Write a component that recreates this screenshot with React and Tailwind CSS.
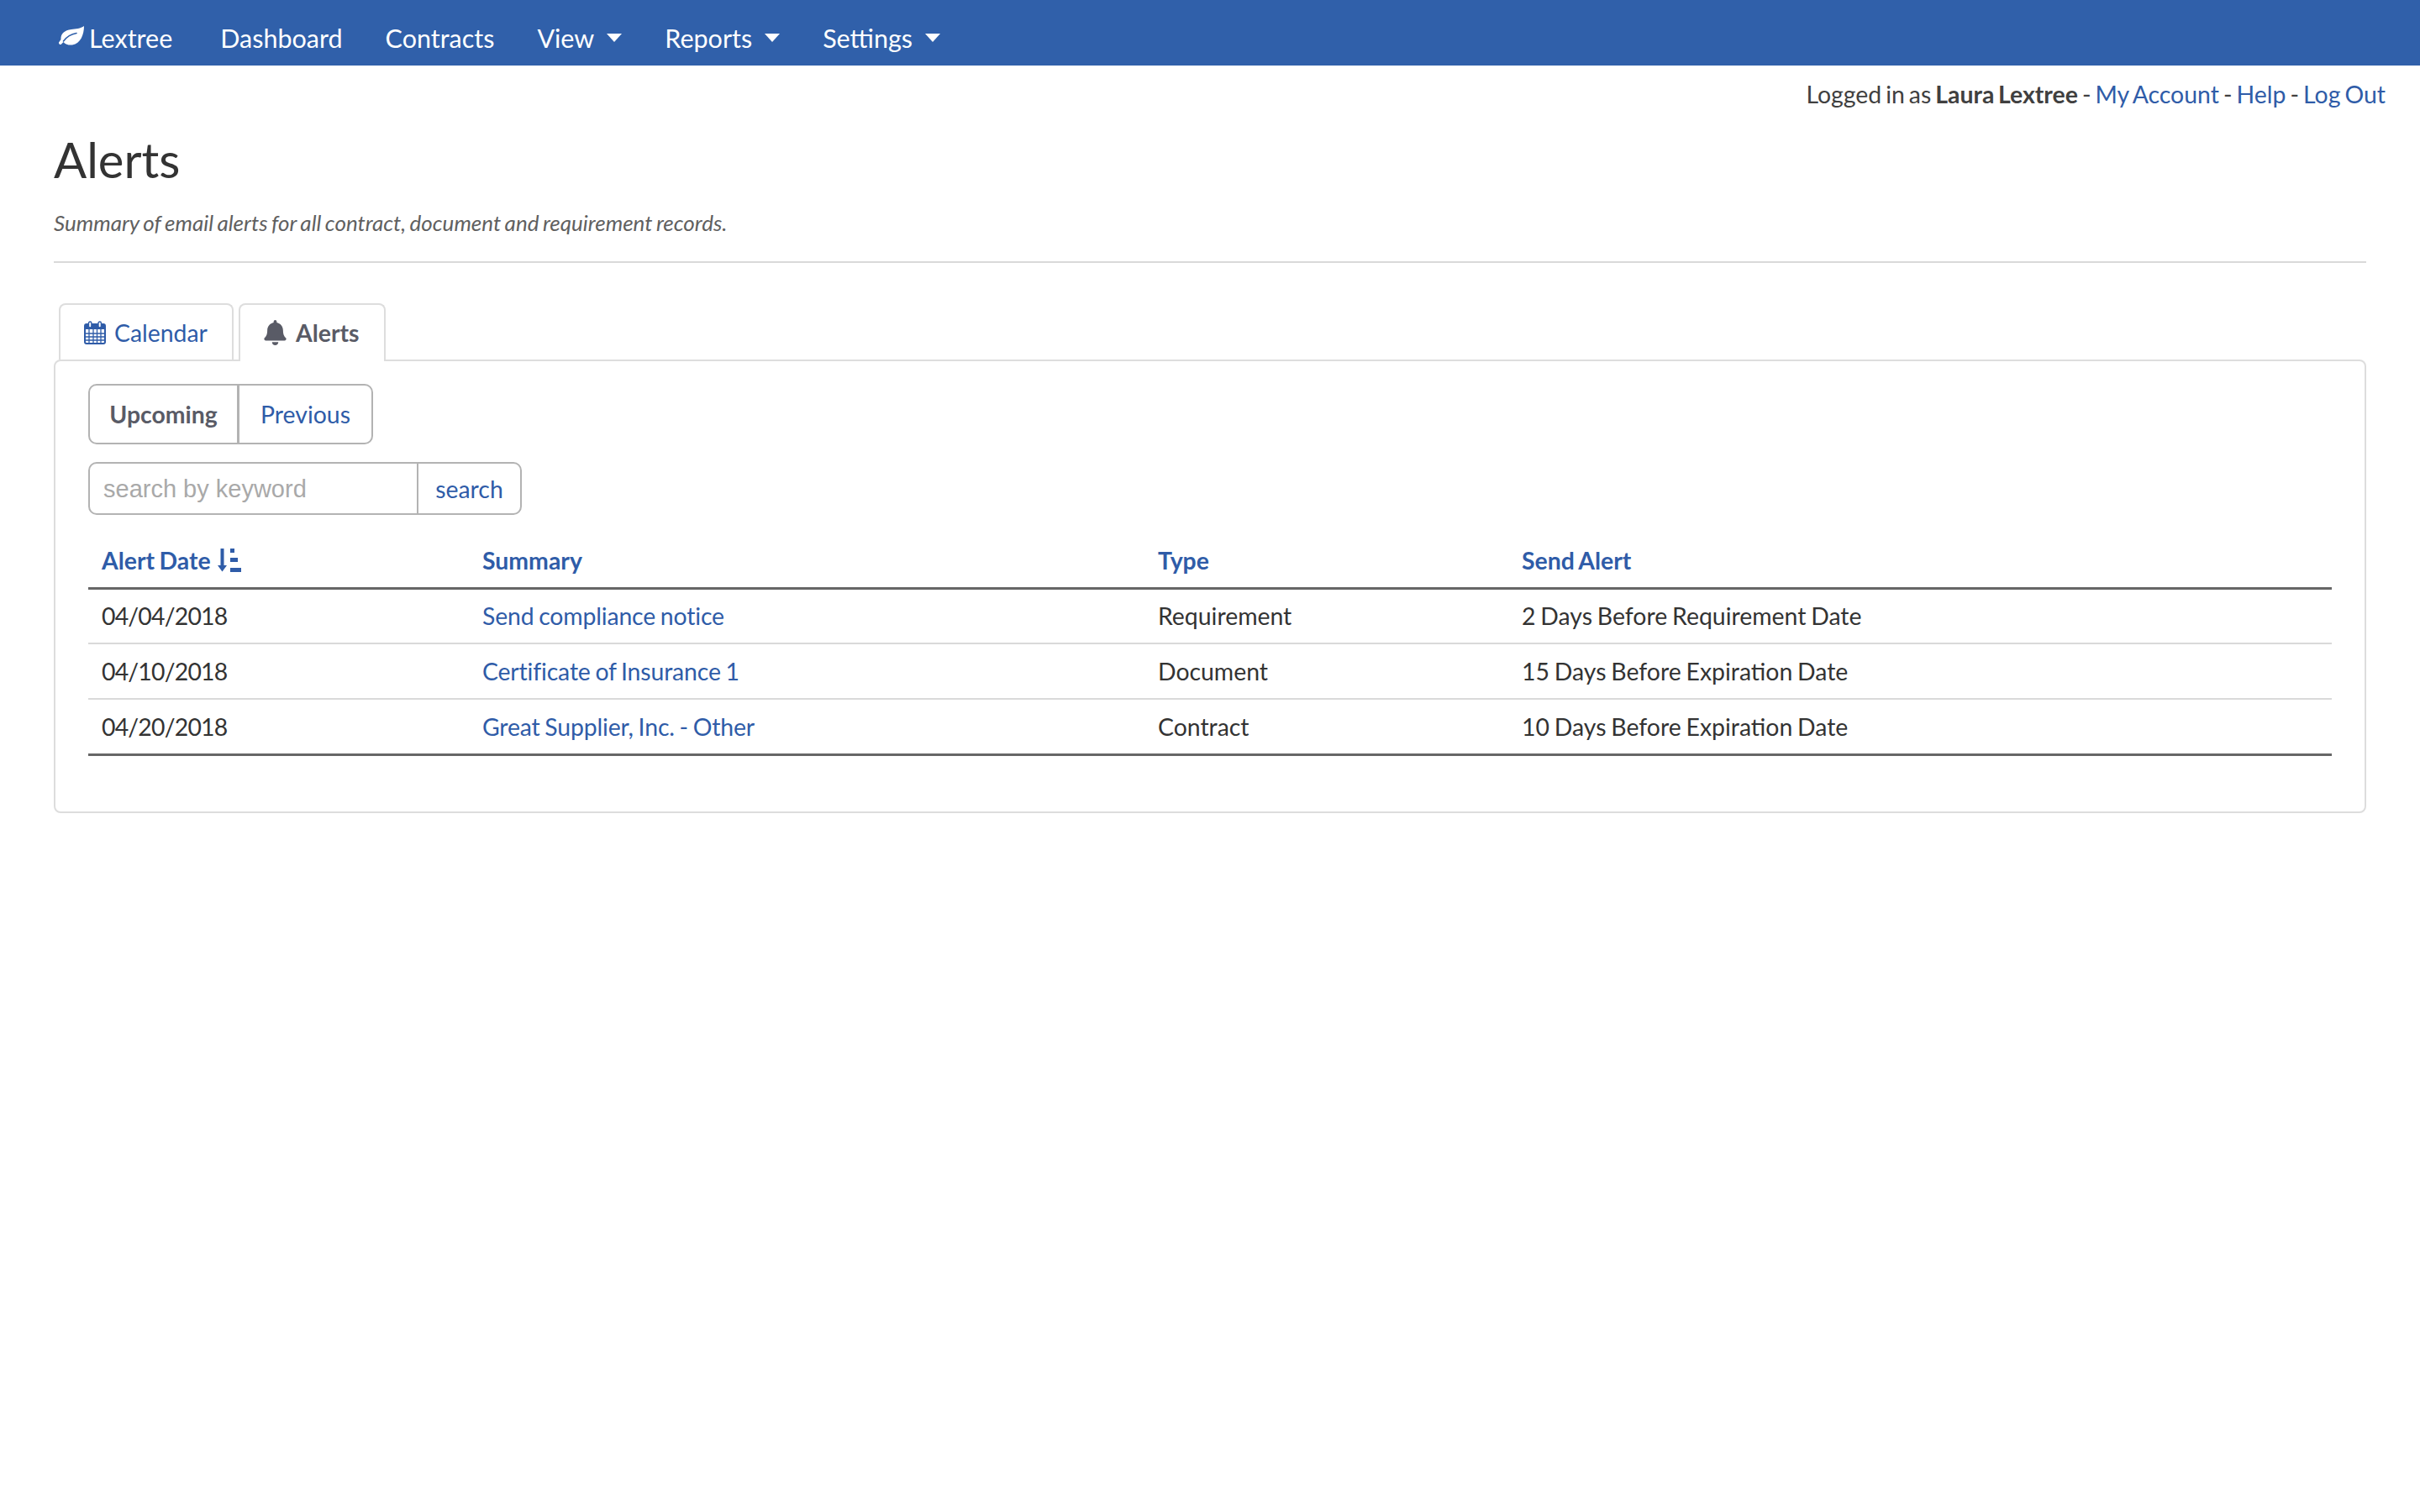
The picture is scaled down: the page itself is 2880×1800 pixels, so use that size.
import React from "react";
import { FaBell } from "react-icons/fa";

const Caret = () => (
  <span className="ml-[15px] inline-block h-0 w-0 border-x-[9px] border-t-[10px] border-x-transparent border-t-white" />
);

const NavItem = ({ children, caret }) => (
  <a className="flex items-center text-white">
    {children}
    {caret && <Caret />}
  </a>
);

const LeafIcon = () => (
  <svg viewBox="0 0 30 23" className="mr-[6px] mb-[6px] h-[23px] w-[30px]">
    <path
      fill="white"
      d="M30 0C26 3 20 3.500 15 4C6 5 2 10 2.500 16L0 19.500C-.5 21 1.500 23 3 21.500L5.500 19C8 22 12 23 16 22.500C26 21 30 10 30 0Z"
    />
    <path d="M5.500 18C10 12 15 9.500 21 8.500" fill="none" stroke="#3060aa" strokeWidth="1.600" strokeLinecap="round" />
  </svg>
);

const CalendarIcon = () => (
  <svg viewBox="0 0 26 28" className="h-[28px] w-[26px]" fill="none">
    <rect x="1" y="4" width="24" height="23" rx="2" stroke="#2f5ca8" strokeWidth="2" fill="white" />
    <rect x="1" y="4" width="24" height="6" fill="#2f5ca8" />
    <path d="M1 15h24M1 19h24M1 23h24M6 10v17M11 10v17M15.500 10v17M20 10v17" stroke="#2f5ca8" strokeWidth="1.300" />
    <rect x="5.500" y="1" width="3.400" height="7" rx="1.700" fill="white" stroke="#2f5ca8" strokeWidth="1.400" />
    <rect x="17" y="1" width="3.400" height="7" rx="1.700" fill="white" stroke="#2f5ca8" strokeWidth="1.400" />
  </svg>
);

const SortIcon = () => (
  <svg viewBox="0 0 28 28" className="ml-[8px] h-[28px] w-[28px]" fill="#2f5ca8">
    <rect x="3.500" y="0" width="4" height="23" />
    <path d="M0 20h11l-5.500 7.500z" />
    <rect x="15" y="0" width="5" height="5" />
    <rect x="15" y="11" width="9" height="5" />
    <rect x="15" y="23" width="13" height="5" />
  </svg>
);

const rows = [
  ["04/04/2018", "Send compliance notice", "Requirement", "2 Days Before Requirement Date"],
  ["04/10/2018", "Certificate of Insurance 1", "Document", "15 Days Before Expiration Date"],
  ["04/20/2018", "Great Supplier, Inc. - Other", "Contract", "10 Days Before Expiration Date"],
];

export default function App() {
  return (
    <div className="min-h-[1800px] bg-white font-['Lato','Open_Sans',sans-serif] text-[28.4px] leading-[42px] [word-spacing:-1.400px] text-[#404040]">
      <nav className="flex h-[78px] items-center bg-[#3060aa] pt-[12px] pl-[70px] text-[30.5px]">
        <a className="flex items-center text-white">
          <LeafIcon />
          Lextree
        </a>
        <div className="ml-[57px] flex gap-[51px]">
          <NavItem>Dashboard</NavItem>
          <NavItem>Contracts</NavItem>
          <NavItem caret>View</NavItem>
          <NavItem caret>Reports</NavItem>
          <NavItem caret>Settings</NavItem>
        </div>
      </nav>

      <div className="flex h-[42px] items-start justify-end pt-[13px] pr-[41px] leading-[42px] [word-spacing:-2.200px]">
        <p>
          Logged in as <b className="font-bold">Laura Lextree</b> - <a className="text-[#2f5ca8]">My Account</a> -{" "}
          <a className="text-[#2f5ca8]">Help</a> - <a className="text-[#2f5ca8]">Log Out</a>
        </p>
      </div>

      <main className="px-[64px]">
        <h1 className="mt-[36px] text-[58px] leading-[68px] font-normal text-[#333333]">Alerts</h1>
        <p className="mt-[23px] text-[26px] leading-[36px] [word-spacing:-1.600px] text-[#606060] italic">
          Summary of email alerts for all contract, document and requirement records.
        </p>
        <hr className="mt-[28px] border-t-2 border-[#d9d9d9]" />

        <div className="relative z-10 mt-[48px] -mb-[2px] flex gap-[6px] pl-[6px]">
          <a className="flex h-[67px] w-[208px] items-center gap-[10px] rounded-t-[8px] border-2 border-b-0 border-[#dddddd] pl-[28px] text-[#2f5ca8]">
            <CalendarIcon />
            Calendar
          </a>
          <a className="flex h-[69px] w-[175px] items-center gap-[11px] rounded-t-[8px] border-2 border-b-0 border-[#dddddd] bg-white pb-[2px] pl-[28px] font-bold text-[#595b66]">
            <FaBell className="h-[30px] w-[27px]" />
            Alerts
          </a>
        </div>

        <section className="h-[540px] rounded-[8px] border-2 border-[#dddddd] px-[39px] pt-[27px]">
          <div className="flex h-[72px] w-[339px] rounded-[10px] border-2 border-[#b3b3b3]">
            <a className="flex w-[178px] items-center justify-center border-r-[3px] border-[#b3b3b3] font-bold text-[#595b66]">
              Upcoming
            </a>
            <a className="flex flex-1 items-center justify-center text-[#2f5ca8]">Previous</a>
          </div>

          <div className="mt-[21px] flex h-[63px] w-[516px] rounded-[10px] border-2 border-[#b3b3b3]">
            <input
              placeholder="search by keyword"
              className="w-[391px] border-r-2 border-[#b3b3b3] bg-transparent pl-[16px] font-['Liberation_Sans',sans-serif] text-[29px] outline-none placeholder:text-[#a9a9a9]"
            />
            <a className="flex flex-1 items-center justify-center text-[#2f5ca8]">search</a>
          </div>

          <table className="mt-[22px] w-[2670px] table-fixed border-collapse">
            <colgroup>
              <col className="w-[453px]" />
              <col className="w-[804px]" />
              <col className="w-[433px]" />
              <col />
            </colgroup>
            <thead>
              <tr className="h-[65px] border-b-[3px] border-[#666666] text-[#2f5ca8]">
                <th className="pl-[16px] text-left font-bold">
                  <span className="flex items-center">
                    Alert Date
                    <SortIcon />
                  </span>
                </th>
                <th className="pl-[16px] text-left font-bold">Summary</th>
                <th className="pl-[16px] text-left font-bold">Type</th>
                <th className="pl-[16px] text-left font-bold">Send Alert</th>
              </tr>
            </thead>
            <tbody>
              {rows.map((r, i) => (
                <tr
                  key={r[0]}
                  className={i === 2 ? "h-[66px] border-b-[3px] border-[#666666]" : "h-[66px] border-b-2 border-[#d9d9d9]"}
                >
                  <td className="pl-[16px] tracking-[-0.8px] text-[#333333]">{r[0]}</td>
                  <td className="pl-[16px] tracking-[-0.15px] text-[#2f5ca8]">{r[1]}</td>
                  <td className="pl-[16px] text-[#333333]">{r[2]}</td>
                  <td className="pl-[16px] text-[#333333]">{r[3]}</td>
                </tr>
              ))}
            </tbody>
          </table>
        </section>
      </main>
    </div>
  );
}
